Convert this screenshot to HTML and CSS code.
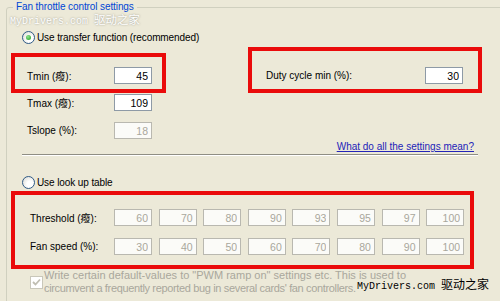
FILE: index.html
```html
<!DOCTYPE html>
<html lang="en">
<head>
    <meta charset="UTF-8">
    <title>Fan throttle control settings</title>
    <link rel="stylesheet" href="styles.css">
</head>
<body>
    <fieldset class="group">
      <legend>Fan throttle control settings</legend>

      <label class="opt opt-first">
        <span class="radio on"></span>
        <span>Use transfer function (recommended)</span>
      </label>

      <div class="transfer">
        <div class="left">
          <div class="hl tmin">
            <div class="field">
              <span class="lbl">Tmin (癈):</span>
              <input class="num" value="45">
            </div>
          </div>
          <div class="field plain">
            <span class="lbl">Tmax (癈):</span>
            <input class="num" value="109">
          </div>
          <div class="field plain slope">
            <span class="lbl">Tslope (%):</span>
            <input class="num" value="18" disabled>
          </div>
        </div>

        <div class="right">
          <div class="hl duty">
            <div class="field">
              <span class="lbl wide">Duty cycle min (%):</span>
              <input class="num" value="30">
            </div>
          </div>
          <div class="help"><a href="#">What do all the settings mean?</a></div>
        </div>
      </div>

      <hr class="sep">

      <label class="opt opt-second">
        <span class="radio"></span>
        <span>Use look up table</span>
      </label>

      <div class="hl lookup">
        <span class="lbl">Threshold (癈):</span>
        <input class="num" value="60" disabled>
        <input class="num" value="70" disabled>
        <input class="num" value="80" disabled>
        <input class="num" value="90" disabled>
        <input class="num" value="93" disabled>
        <input class="num" value="95" disabled>
        <input class="num" value="97" disabled>
        <input class="num" value="100" disabled>

        <span class="lbl">Fan speed (%):</span>
        <input class="num" value="30" disabled>
        <input class="num" value="40" disabled>
        <input class="num" value="50" disabled>
        <input class="num" value="60" disabled>
        <input class="num" value="70" disabled>
        <input class="num" value="80" disabled>
        <input class="num" value="90" disabled>
        <input class="num" value="100" disabled>
      </div>

      <label class="check-row">
        <span class="check">
          <svg width="11" height="11" viewBox="0 0 11 11"><path d="M2 5 L4.5 7.5 L9 2.5" fill="none" stroke="#C0BEB2" stroke-width="1.8"/></svg>
        </span>
        <span class="check-text">
          <span>Write certain default-values to "PWM ramp on" settings etc. This is used to</span>
          <span class="tight">circumvent a frequently reported bug in several cards' fan controllers.</span>
        </span>
      </label>
    </fieldset>

    <div class="mark mark-top">MyDrivers.com <span class="cjk">驱动之家</span></div>
    <div class="mark mark-bottom">MyDrivers.com <span class="cjk">驱动之家</span></div>
</body>
</html>
```

FILE: styles.css
```css
body {
  margin: 0;
  height: 301px;
  overflow: hidden;
  position: relative;
  background: #ECE9D8;
  font-family: "Liberation Sans", Arial, "Noto Sans CJK SC", sans-serif;
  font-size: 10px;
  color: #000;
}

.group {
  margin: 0 0 0 6px;
  padding: 0;
  width: 560px;
  height: 340px;
  min-width: 0;
  box-sizing: border-box;
  border: 1px solid #D0D0BF;
  border-radius: 3px;
}
.group legend {
  margin-left: 6px;
  padding: 0 3px;
  line-height: 14px;
  font-size: 10px;
  letter-spacing: -0.1px;
  color: #0046D5;
}

/* radio options */
.opt {
  display: flex;
  align-items: center;
  gap: 2px;
  height: 14px;
  margin-left: 15px;
  font-size: 10px;
  letter-spacing: -0.1px;
}
.opt-first { margin-top: 16px; }
.opt-second { margin-top: 19px; }

.radio {
  width: 13px;
  height: 13px;
  box-sizing: border-box;
  border: 1px solid #2F5A86;
  border-radius: 50%;
  background: radial-gradient(circle at 65% 65%, #fff 30%, #D6D6CE);
  display: flex;
  align-items: center;
  justify-content: center;
}
.radio.on::after {
  content: "";
  width: 5px;
  height: 5px;
  border-radius: 50%;
  background: radial-gradient(circle at 40% 35%, #8FE58F, #1E9A1E);
}

/* highlight frames */
.hl {
  border: 4px solid #EA0B0B;
  box-sizing: border-box;
}

.transfer {
  display: flex;
  margin: 3px 0 0 4px;
}
.left {
  width: 155px;
  margin-top: 6px;
}
.right {
  width: 234px;
  margin-left: 82px;
}

.tmin {
  height: 40px;
  padding: 10px 0 0 12px;
}
.duty {
  height: 46px;
  padding: 16px 0 0 14px;
}

.field {
  display: flex;
  align-items: center;
  height: 17px;
}
.field.plain {
  margin: 1px 0 0 16px;
}
.field.slope {
  margin-top: 11px;
}
.lbl {
  width: 87px;
  flex: none;
}
.lbl.wide {
  width: 159px;
}

.num {
  width: 38px;
  height: 17px;
  box-sizing: border-box;
  margin: 0;
  padding: 0 3px 0 0;
  border: 1px solid #8E9AA6;
  background: #fff;
  font: inherit;
  font-size: 10.5px;
  color: #000;
  text-align: right;
}
.num:disabled {
  border-color: #B9B8B0;
  background: #FBFBF8;
  color: #A9A79C;
}

.help {
  margin-top: 48px;
  padding-right: 8px;
  line-height: 12px;
  text-align: right;
}
.help a {
  color: #2323B8;
  font-size: 10px;
}

.sep {
  margin: 1px 0 0 15px;
  width: 456px;
  height: 0;
  border: 0;
  border-top: 1px solid #8F8E84;
  border-bottom: 1px solid #fff;
}

.lookup {
  display: grid;
  grid-template-columns: 77.4px repeat(8, 38px);
  grid-auto-rows: 17px;
  column-gap: 6.6px;
  row-gap: 12px;
  align-items: center;
  width: 463px;
  height: 78px;
  margin: 2px 0 0 4px;
  padding: 14px 0 0 15px;
}

.check-row {
  display: flex;
  align-items: center;
  gap: 1px;
  margin-left: 23px;
  line-height: 13px;
  font-size: 11px;
  color: #A9A79C;
  white-space: nowrap;
}
.check-text {
  display: flex;
  flex-direction: column;
}
.check-text .tight {
  letter-spacing: -0.35px;
}
.check {
  width: 13px;
  height: 13px;
  box-sizing: border-box;
  border: 1px solid #C9C7BA;
  background: #fff;
  display: flex;
  align-items: center;
  justify-content: center;
  flex: none;
}

/* watermarks laid over the screenshot */
.mark {
  position: absolute;
  font-family: "Liberation Mono", "DejaVu Sans Mono", monospace;
  font-size: 10px;
  line-height: 12px;
  white-space: nowrap;
}
.mark .cjk {
  font-family: "Noto Sans CJK SC", sans-serif;
  font-size: 11.5px;
}
.mark-top {
  left: 10px;
  top: 13px;
  color: #fff;
  text-shadow: 0 0 2px rgba(90, 90, 80, 0.6);
}
.mark-bottom {
  left: 357px;
  top: 278px;
  color: #000;
}
.mark-bottom .cjk {
  font-size: 12px;
}
```
